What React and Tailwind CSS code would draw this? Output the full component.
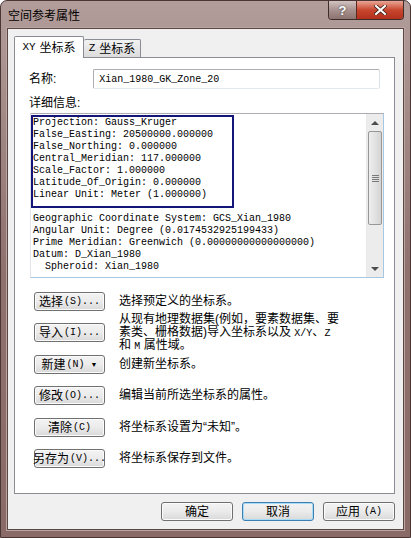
import React from "react";

const MONO = { fontFamily: '"Liberation Mono", "DejaVu Sans Mono", monospace' };
const UI = { fontFamily: '"Liberation Sans", "Noto Sans CJK SC", sans-serif' };

const projLines = [
  "Projection: Gauss_Kruger",
  "False_Easting: 20500000.000000",
  "False_Northing: 0.000000",
  "Central_Meridian: 117.000000",
  "Scale_Factor: 1.000000",
  "Latitude_Of_Origin: 0.000000",
  "Linear Unit: Meter (1.000000)",
];

const gcsLines = [
  "Geographic Coordinate System: GCS_Xian_1980",
  "Angular Unit: Degree (0.0174532925199433)",
  "Prime Meridian: Greenwich (0.00000000000000000)",
  "Datum: D_Xian_1980",
  "  Spheroid: Xian_1980",
];

// name / accelerator / description lines; row carries height and space above
const actions = [
  { name: "选择", key: "(S)...", row: "h-[19px]", desc: ["选择预定义的坐标系。"] },
  {
    name: "导入",
    key: "(I)...",
    row: "mt-[2px] h-[39px]",
    desc: [
      "从现有地理数据集(例如，要素数据集、要",
      <>素类、栅格数据)导入坐标系以及 <span style={MONO} className="text-[10px]">X/Y</span>、<span style={MONO} className="text-[10px]">Z</span></>,
      <>和 <span style={MONO} className="text-[10px]">M</span> 属性域。</>,
    ],
  },
  { name: "新建", key: "(N)", row: "mt-[3px] h-[19px]", desc: ["创建新坐标系。"], menu: true },
  { name: "修改", key: "(O)...", row: "mt-[12px] h-[19px]", desc: ["编辑当前所选坐标系的属性。"] },
  { name: "清除", key: "(C)", row: "mt-[13px] h-[19px]", desc: ["将坐标系设置为“未知”。"] },
  { name: "另存为", key: "(V)...", row: "mt-[12px] h-[19px]", desc: ["将坐标系保存到文件。"] },
];

function WinButton({ children, focused, className = "" }) {
  return (
    <div
      className={`flex h-[19px] shrink-0 items-center justify-center whitespace-nowrap rounded-[3px] border bg-gradient-to-b from-[#f3f3f3] via-[#ebebeb] to-[#d9d9d9] text-[12px] leading-none text-black ${
        focused ? "border-[#3c7fb1] shadow-[inset_0_0_0_1px_#a8dcf6]" : "border-[#707070] shadow-[inset_0_0_0_1px_#fbfbfb]"
      } ${className}`}
    >
      {children}
    </div>
  );
}

function ScrollBar() {
  return (
    <div className="flex w-[17px] flex-col border-l border-[#e8e8e8] bg-[#ececec]">
      <div className="flex h-[17px] items-center justify-center">
        <div className="h-0 w-0 border-x-[4px] border-b-[4px] border-x-transparent border-b-[#4d4d4d]" />
      </div>
      <div className="mx-[1px] flex h-[94px] items-center justify-center rounded-[2px] border border-[#979797] bg-gradient-to-r from-[#eeeeee] via-[#e2e2e2] to-[#d4d4d4]">
        <div className="flex flex-col gap-[1px]">
          <div className="h-px w-[7px] bg-[#7a7a7a]" />
          <div className="h-px w-[7px] bg-[#7a7a7a]" />
          <div className="h-px w-[7px] bg-[#7a7a7a]" />
          <div className="h-px w-[7px] bg-[#7a7a7a]" />
        </div>
      </div>
      <div className="flex-1" />
      <div className="flex h-[17px] items-center justify-center">
        <div className="h-0 w-0 border-x-[4px] border-t-[4px] border-x-transparent border-t-[#4d4d4d]" />
      </div>
    </div>
  );
}

export default function App() {
  return (
    <div
      className="relative flex h-[538px] w-[411px] flex-col overflow-hidden rounded-t-[7px] border border-[#4a3634] bg-gradient-to-b from-[#b29d9a] via-[#8f716e] to-[#8a6a67]"
      style={UI}
    >
      {/* title bar */}
      <div className="flex h-[27px] shrink-0 items-start">
        <div className="ml-[7px] mt-[8px] text-[12px] leading-[14px] text-black">空间参考属性</div>
        <div className="ml-auto mr-[6px] flex h-[19px] overflow-hidden rounded-b-[4px] border border-t-0 border-[#3d2c2a]">
          <div className="flex w-[27px] items-center justify-center bg-gradient-to-b from-[#d2c4c2] via-[#a8918e] to-[#8c7370] text-[13px] font-bold leading-none text-white [text-shadow:0_0_2px_#333]">
            ?
          </div>
          <div className="flex w-[47px] items-center justify-center border-l border-[#5a2a22] bg-gradient-to-b from-[#e8a494] via-[#c8452e] to-[#b3301c]">
            <svg width="13" height="10" viewBox="0 0 13 10">
              <path d="M2 1 L11 9 M11 1 L2 9" stroke="#3a1a14" strokeWidth="3.6" strokeLinecap="square" />
              <path d="M2 1 L11 9 M11 1 L2 9" stroke="#ffffff" strokeWidth="2.2" strokeLinecap="square" />
            </svg>
          </div>
        </div>
      </div>

      {/* client area */}
      <div className="mx-[6px] mb-[7px] flex flex-1 flex-col border border-[#5b4644] bg-[#f0f0f0] shadow-[0_0_0_1px_#b9a5a2]">
        {/* tabs */}
        <div className="ml-[6px] mt-[7px] flex items-end">
          <div className="relative z-10 -mb-px flex h-[22px] w-[70px] items-center justify-center rounded-t-[2px] border border-b-0 border-[#898c95] bg-white text-[12px]">
            <span style={MONO} className="mr-[4px] text-[11px]">XY</span>
            <span>坐标系</span>
          </div>
          <div className="flex h-[18px] w-[57px] items-center justify-center rounded-t-[2px] border border-b-0 border-l-0 border-[#898c95] bg-gradient-to-b from-[#f2f2f2] to-[#dcdcdc] text-[12px]">
            <span style={MONO} className="mr-[4px] text-[11px]">Z</span>
            <span>坐标系</span>
          </div>
        </div>

        {/* tab panel */}
        <div className="ml-[6px] mr-[8px] flex h-[437px] flex-col border border-[#898c95] bg-white px-[14px]">
          <div className="mt-[11px] flex items-center">
            <div className="w-[65px] text-[12px]">名称:</div>
            <div className="flex h-[20px] w-[290px] items-center rounded-[2px] border border-[#abadb3] border-b-[#e3e9ef] border-r-[#dbdfe6] pl-[5px] text-[10px]" style={MONO}>
              Xian_1980_GK_Zone_20
            </div>
          </div>
          <div className="mt-[7px] text-[12px] leading-[14px]">详细信息:</div>

          {/* details text box */}
          <div className="relative ml-px mt-[3px] flex h-[165px] w-[354px] border border-[#abadb3] border-b-[#a7c8e2] border-r-[#a7c8e2] border-l-[#e2e3ea]">
            <div className="flex-1 overflow-hidden pl-[2px] pt-[3px] text-[10px] leading-[12px] whitespace-pre text-black" style={MONO}>
              {projLines.map((l) => (
                <div key={l}>{l}</div>
              ))}
              <div>&nbsp;</div>
              {gcsLines.map((l) => (
                <div key={l}>{l}</div>
              ))}
            </div>
            <ScrollBar />
            <div className="absolute left-0 top-[1px] h-[93px] w-[203px] border-2 border-[#131578]" />
          </div>

          {/* actions */}
          <div className="mt-[14px] flex flex-col">
            {actions.map((a) => (
              <div key={a.name} className={`flex shrink-0 items-center ${a.row}`}>
                <WinButton className="ml-[5px] w-[71px]">
                  <span>{a.name}</span>
                  <span style={MONO} className="ml-[1px] text-[10px]">{a.key}</span>
                  {a.menu && <span className="ml-[6px] text-[7px]">▼</span>}
                </WinButton>
                <div className="ml-[14px] whitespace-nowrap text-[12px] leading-[13px]">
                  {a.desc.map((d, i) => (
                    <div key={i} className="h-[13px]">{d}</div>
                  ))}
                </div>
              </div>
            ))}
          </div>
        </div>

        {/* dialog buttons */}
        <div className="mr-[8px] mt-[8px] flex justify-end gap-[9px]">
          <WinButton className="w-[72px]">确定</WinButton>
          <WinButton className="w-[72px]" focused>取消</WinButton>
          <WinButton className="w-[72px]">
            <span>应用</span>
            <span style={MONO} className="ml-[4px] text-[10px]">(A)</span>
          </WinButton>
        </div>
      </div>
    </div>
  );
}
